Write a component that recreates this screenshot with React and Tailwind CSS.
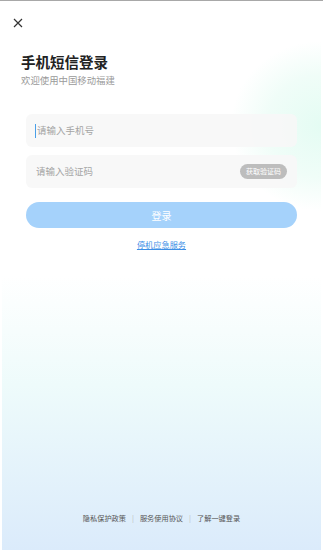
import React, { useState } from 'react'

const font = { fontFamily: '"Noto Sans CJK SC", "Noto Sans", sans-serif' }

export default function App() {
    const [phone, setPhone] = useState('')
    const [code, setCode] = useState('')

    return (
        <div className="w-[323px] h-[552px] bg-white border-t border-t-[#a8a8a8] px-[2px] pb-[2px] overflow-hidden" style={font}>
            <div className="relative h-full overflow-hidden bg-gradient-to-b from-white from-[50%] via-[#eefbfb] via-[70%] to-[#dbebfb] flex flex-col">
                {/* mint blob on the right */}
                <div className="absolute right-[-90px] top-[40px] w-[180px] h-[170px] rounded-full bg-[radial-gradient(closest-side,#e4fcf3,#f0fdf8_60%,rgba(255,255,255,0))]" />

                <div className="relative flex flex-col">
                    <button className="ml-[10px] mt-[16px] w-[12px] h-[12px] flex items-center justify-center">
                        <svg width="10" height="10" viewBox="0 0 10 10" fill="none">
                            <path d="M1 1L9 9M9 1L1 9" stroke="#333" strokeWidth="1.2" />
                        </svg>
                    </button>

                    <h1 className="ml-[19px] mt-[23px] text-[14.5px] leading-[20px] font-semibold text-[#222]">手机短信登录</h1>
                    <p className="ml-[19px] mt-[1px] text-[9.4px] leading-[14px] text-[#9a9a9a]">欢迎使用中国移动福建</p>

                    <div className="mx-[24px] mt-[27px] flex flex-col gap-[8px]">
                        <div className="h-[33px] rounded-[6px] bg-[#f7f7f7]/90 flex items-center px-[9px]">
                            <span className="w-[1px] h-[14px] bg-[#4a9fe8] mr-[1px]" />
                            <input
                                value={phone}
                                onChange={e => setPhone(e.target.value)}
                                placeholder="请输入手机号"
                                className="flex-1 bg-transparent outline-none text-[9.5px] text-[#333] placeholder:text-[#a5a5a5]"
                            />
                        </div>
                        <div className="h-[33px] rounded-[6px] bg-[#f7f7f7]/90 flex items-center pl-[10px] pr-[10px]">
                            <input
                                value={code}
                                onChange={e => setCode(e.target.value)}
                                placeholder="请输入验证码"
                                className="flex-1 min-w-0 bg-transparent outline-none text-[9.5px] text-[#333] placeholder:text-[#a5a5a5]"
                            />
                            <button className="h-[15px] px-[6px] rounded-full bg-[#bdbdbd] text-white text-[7px] leading-[15px]">获取验证码</button>
                        </div>

                        <button className="mt-[6px] h-[26px] rounded-full bg-[#a5d2fb] text-white text-[10px]">登录</button>
                    </div>

                    <a className="self-center mt-[10px] text-[8.2px] leading-[13px] text-[#3d8fe6] underline">停机应急服务</a>
                </div>

                <div className="relative mt-auto mb-[26px] flex items-center justify-center gap-[6px] text-[7.2px] text-[#555]">
                    <span>隐私保护政策</span>
                    <span className="text-[#bbb]">|</span>
                    <span>服务使用协议</span>
                    <span className="text-[#bbb]">|</span>
                    <span>了解一键登录</span>
                </div>
            </div>
        </div>
    )
}
